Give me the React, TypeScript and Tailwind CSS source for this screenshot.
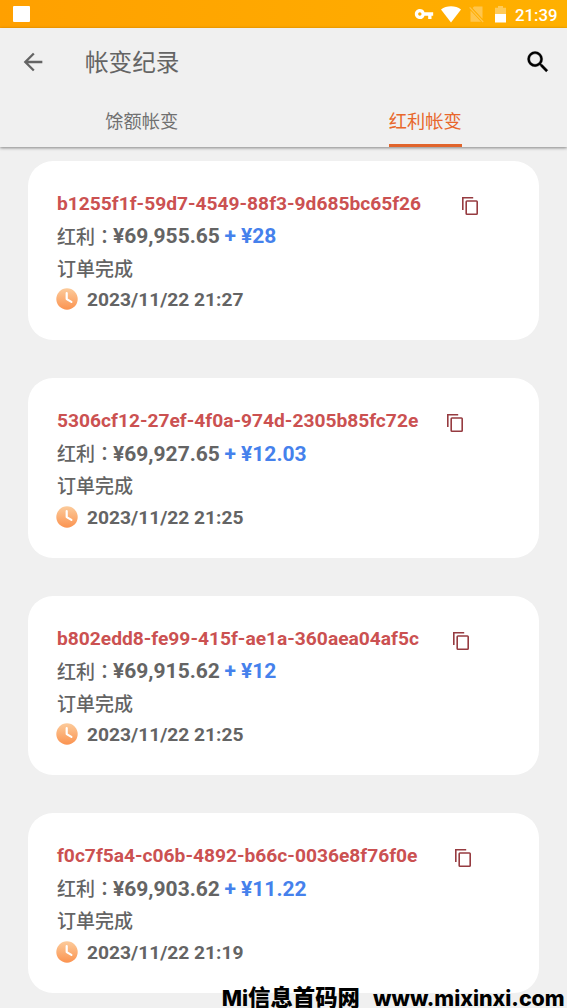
import React from 'react';
import { useState } from 'react';

interface RecordItem {
  id: string;
  balance: string;
  change: string;
  status: string;
  time: string;
  idWidth: string;
}

const records: RecordItem[] = [
  {
    id: 'b1255f1f-59d7-4549-88f3-9d685bc65f26',
    balance: '¥69,955.65',
    change: '+ ¥28',
    status: '订单完成',
    time: '2023/11/22 21:27',
    idWidth: 'w-[405px]',
  },
  {
    id: '5306cf12-27ef-4f0a-974d-2305b85fc72e',
    balance: '¥69,927.65',
    change: '+ ¥12.03',
    status: '订单完成',
    time: '2023/11/22 21:25',
    idWidth: 'w-[390px]',
  },
  {
    id: 'b802edd8-fe99-415f-ae1a-360aea04af5c',
    balance: '¥69,915.62',
    change: '+ ¥12',
    status: '订单完成',
    time: '2023/11/22 21:25',
    idWidth: 'w-[396px]',
  },
  {
    id: 'f0c7f5a4-c06b-4892-b66c-0036e8f76f0e',
    balance: '¥69,903.62',
    change: '+ ¥11.22',
    status: '订单完成',
    time: '2023/11/22 21:19',
    idWidth: 'w-[398px]',
  },
];

const tabs = ['馀额帐变', '红利帐变'];

const StatusBar = () => {
  return (
    <div className="flex h-7 shrink-0 items-center bg-gradient-to-r from-[#ffa000] to-[#ffb000] pl-[13px] pr-[9px] text-white">
      <div className="h-4 w-[17px] rounded-[1px] bg-white" />
      <svg
        className="ml-auto h-[20px] w-[20px]"
        viewBox="0 0 24 24"
        fill="currentColor"
      >
        <path d="M12.65 10A5.99 5.99 0 0 0 7 6c-3.31 0-6 2.69-6 6s2.69 6 6 6a5.99 5.99 0 0 0 5.65-4H17v4h4v-4h2v-4H12.65zM7 14c-1.1 0-2-.9-2-2s.9-2 2-2 2 .9 2 2-.9 2-2 2z" />
      </svg>
      <svg
        className="ml-[7px] h-[17px] w-5"
        viewBox="0 0 20 17"
        fill="currentColor"
      >
        <path d="M0 3.6C5.4-.8 14.6-.8 20 3.6L10 16.5z" />
      </svg>
      <svg
        className="ml-[8px] h-[17px] w-[15px] opacity-30"
        viewBox="0 0 15 17"
        fill="currentColor"
      >
        <path d="M5 .5h8.5v12.2L3.6 2zM1.5 4.4L12 15.7H1.5z" />
        <path d="M.6 1.4L14.2 16" stroke="currentColor" strokeWidth="1.2" />
      </svg>
      <svg
        className="ml-[11px] h-[17px] w-[11px]"
        viewBox="0 0 11 17"
        fill="currentColor"
      >
        <path d="M0 1.8h3V0h5v1.8h3V8H0z" opacity="0.35" />
        <path d="M0 8h11v8.5H0z" />
      </svg>
      <span className="ml-[9px] w-[43px] whitespace-nowrap pt-px text-[16.8px] font-medium leading-7">
        21:39
      </span>
    </div>
  );
};

const CopyIcon = () => {
  return (
    <svg
      className="mt-[11px] h-[18px] w-4 shrink-0"
      viewBox="0 0 16 18"
      fill="none"
      stroke="#963b40"
      strokeWidth="1.6"
    >
      <path d="M.8 13V.8H11.2" />
      <rect x="4.2" y="4" width="11" height="13.2" rx="0.8" />
    </svg>
  );
};

const ClockIcon = () => {
  return (
    <svg className="-ml-px h-[22px] w-[22px]" viewBox="0 0 22 22">
      <defs>
        <linearGradient id="clockFill" x1="0" y1="0" x2="0" y2="1">
          <stop offset="0" stopColor="#fccb9b" />
          <stop offset="1" stopColor="#fb9350" />
        </linearGradient>
      </defs>
      <circle cx="11" cy="11" r="10.7" fill="url(#clockFill)" />
      <path
        d="M10.7 5.2v5.9l4.7 2.8"
        fill="none"
        stroke="#fff"
        strokeWidth="2.2"
        strokeLinecap="round"
        strokeLinejoin="round"
      />
    </svg>
  );
};

const RecordCard = ({ item }: { item: RecordItem }) => {
  return (
    <div className="h-[179.5px] shrink-0 rounded-[25px] bg-white pl-[29px] pt-[25px] font-bold text-[#646464]">
      <div className="flex h-[34px] items-start">
        <div
          className={`${item.idWidth} shrink-0 whitespace-nowrap pt-px text-[19.2px] leading-[34px] text-[#cb5151]`}
        >
          {item.id}
        </div>
        <button>
          <CopyIcon />
        </button>
      </div>
      <div className="flex h-8 items-center whitespace-nowrap text-[21px]">
        <span className="font-['Noto_Sans_CJK_TC',sans-serif] text-[19px] font-medium">
          红利：
        </span>
        <span className="-ml-px pt-[2px]">{item.balance}</span>
        <span className="ml-[4.5px] pt-[2px] text-[#4581ec]">
          {item.change}
        </span>
      </div>
      <div className="h-8 pt-0.5 text-[19px] font-medium leading-8">
        {item.status}
      </div>
      <div className="flex h-[31px] items-center">
        <ClockIcon />
        <span className="ml-[9px] whitespace-nowrap pt-[3px] text-[19.2px]">
          {item.time}
        </span>
      </div>
    </div>
  );
};

const App = () => {
  const [activeTab, setActiveTab] = useState(1);

  return (
    <div className="relative flex h-[1008px] w-[567px] flex-col overflow-hidden bg-[#f0f0f0] font-[Roboto,'Noto_Sans_CJK_SC',sans-serif]">
      <StatusBar />
      <header className="z-10 h-[119px] shrink-0 bg-[#f0f0f0] shadow-[0_1px_3px_rgba(0,0,0,0.45)]">
        <div className="flex h-[67px] items-center pl-[19px] pr-[15px]">
          <svg className="h-7 w-7" viewBox="0 0 24 24" fill="#646464">
            <path d="M20 11H7.83l5.59-5.59L12 4l-8 8 8 8 1.41-1.41L7.83 13H20v-2z" />
          </svg>
          <h1 className="ml-[38px] pt-[4px] text-[23.6px] text-[#646464]">
            帐变纪录
          </h1>
          <svg
            className="ml-auto h-[28px] w-[28px]"
            viewBox="0 0 24 24"
            fill="#000"
            stroke="#000"
            strokeWidth="0.3"
          >
            <path d="M15.5 14h-.79l-.28-.27A6.47 6.47 0 0 0 16 9.5 6.5 6.5 0 1 0 9.5 16c1.61 0 3.09-.59 4.23-1.57l.27.28v.79l5 4.99L20.49 19l-4.99-5zm-6 0C7.01 14 5 11.99 5 9.5S7.01 5 9.5 5 14 7.01 14 9.5 11.99 14 9.5 14z" />
          </svg>
        </div>
        <div className="flex h-[52px]">
          {tabs.map((tab, index) => (
            <button
              key={tab}
              onClick={() => setActiveTab(index)}
              className="flex flex-1 justify-center"
            >
              <span
                className={
                  activeTab === index
                    ? 'h-[52px] border-b-3 border-[#e1652c] text-[18.2px] leading-[54px] text-[#e8672b]'
                    : 'h-[52px] text-[18.2px] leading-[54px] text-[#707070]'
                }
              >
                {tab}
              </span>
            </button>
          ))}
        </div>
      </header>
      <main className="flex flex-col gap-[38px] px-7 pt-[13.8px]">
        {records.map((item) => (
          <RecordCard key={item.id} item={item} />
        ))}
      </main>
      <div className="absolute bottom-px right-[2px] flex items-baseline gap-[13px] whitespace-nowrap font-[Inter,'Noto_Sans_CJK_SC',sans-serif] text-[21.5px] font-extrabold leading-[18px] text-black">
        <span>
          Mi<span className="text-[22.4px] font-black">信息首码网</span>
        </span>
        <span className="w-[192px] text-[21.4px]">www.mixinxi.com</span>
      </div>
    </div>
  );
};

export default App;
